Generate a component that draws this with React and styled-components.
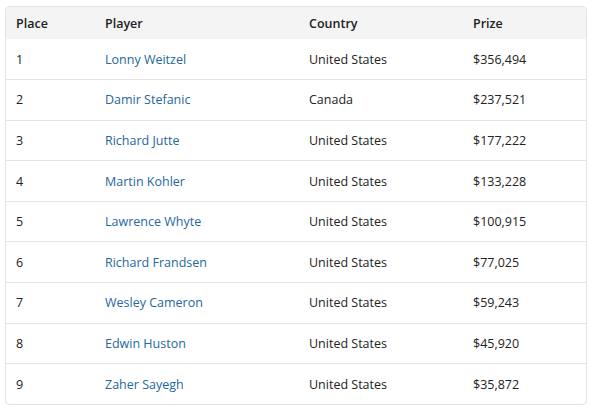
import React from 'react';
import styled, { createGlobalStyle } from 'styled-components';

const Global = createGlobalStyle`
  body {
    margin: 0;
    background: #fff;
    font-family: "Open Sans", "Noto Sans", sans-serif;
  }
`

const Page = styled.div`
  padding: 6px 8px 0 5px;
`

const Frame = styled.div`
  width: 580px;
  border: 1px solid #e3e3e3;
  border-radius: 4px;
  overflow: hidden;
`

const Table = styled.table`
  width: 100%;
  border-collapse: collapse;
  table-layout: fixed;
  font-size: 12.5px;
  color: #222;
`

const HeadRow = styled.tr`
  height: 32px;
  background: #f4f4f4;
`

const Th = styled.th`
  box-sizing: border-box;
  text-align: left;
  font-weight: 600;
  padding: 0 0 0 10px;
  width: ${p => (p.w ? `${p.w}px` : 'auto')};
`

const Row = styled.tr`
  height: 40.6px;
  border-top: 1px solid #e6e6e6;
  &:first-child {
    border-top: none;
  }
`

const Td = styled.td`
  padding: 0 0 0 10px;
`

const PlayerLink = styled.a`
  color: #25679e;
  text-decoration: none;
`

const results = [
  ['1', 'Lonny Weitzel', 'United States', '$356,494'],
  ['2', 'Damir Stefanic', 'Canada', '$237,521'],
  ['3', 'Richard Jutte', 'United States', '$177,222'],
  ['4', 'Martin Kohler', 'United States', '$133,228'],
  ['5', 'Lawrence Whyte', 'United States', '$100,915'],
  ['6', 'Richard Frandsen', 'United States', '$77,025'],
  ['7', 'Wesley Cameron', 'United States', '$59,243'],
  ['8', 'Edwin Huston', 'United States', '$45,920'],
  ['9', 'Zaher Sayegh', 'United States', '$35,872'],
];

export default function App() {
  return (
    <Page>
      <Global />
      <Frame>
        <Table>
          <thead>
            <HeadRow>
              <Th w={89}>Place</Th>
              <Th w={204}>Player</Th>
              <Th w={164}>Country</Th>
              <Th>Prize</Th>
            </HeadRow>
          </thead>
          <tbody>
            {results.map(r => (
              <Row key={r[0]}>
                <Td>{r[0]}</Td>
                <Td><PlayerLink href="#">{r[1]}</PlayerLink></Td>
                <Td>{r[2]}</Td>
                <Td>{r[3]}</Td>
              </Row>
            ))}
          </tbody>
        </Table>
      </Frame>
    </Page>
  )
}
